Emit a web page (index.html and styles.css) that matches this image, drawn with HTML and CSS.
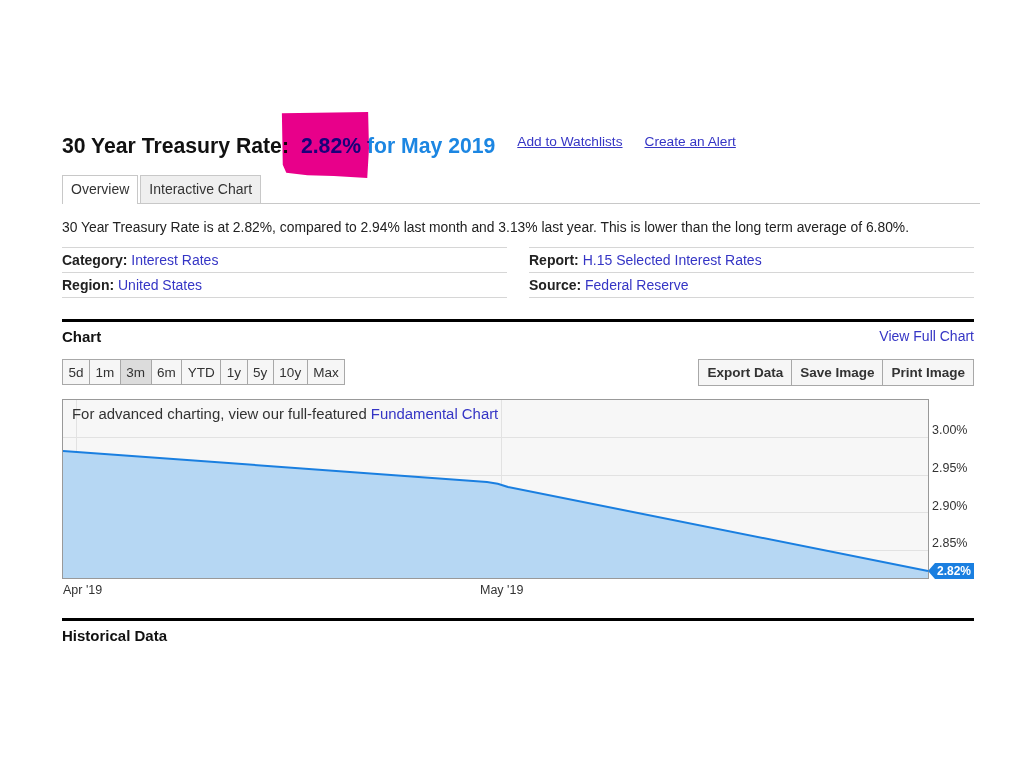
FILE: index.html
```html
<!DOCTYPE html>
<html lang="en">
<head>
  <meta charset="UTF-8" />
  <meta name="viewport" content="width=device-width, initial-scale=1.0" />
  <title>30 Year Treasury Rate</title>
  <link rel="stylesheet" href="styles.css">
</head>
<body>

  <div class="page">
    <!-- Title row -->
    <div class="title-row">
      <h1 class="title">
        30 Year Treasury Rate:<span class="rate">2.82% for May 2019</span>
        <span class="marker"></span>
      </h1>
      <div class="title-links">
        <a href="#">Add to Watchlists</a>
        <a href="#">Create an Alert</a>
      </div>
    </div>

    <!-- Tabs -->
    <div class="tabs">
      <div class="tab active">Overview</div>
      <div class="tab">Interactive Chart</div>
    </div>

    <p class="summary">30 Year Treasury Rate is at 2.82%, compared to 2.94% last month and 3.13% last year. This is lower than the long term average of 6.80%.</p>

    <div class="info">
      <div class="info-col">
        <div class="info-row"><b>Category:</b> <a href="#">Interest Rates</a></div>
        <div class="info-row"><b>Region:</b> <a href="#">United States</a></div>
      </div>
      <div class="info-col">
        <div class="info-row"><b>Report:</b> <a href="#">H.15 Selected Interest Rates</a></div>
        <div class="info-row"><b>Source:</b> <a href="#">Federal Reserve</a></div>
      </div>
    </div>

    <!-- Chart section -->
    <div class="section">
      <div class="section-head">
        <h2>Chart</h2>
        <a href="#">View Full Chart</a>
      </div>

      <div class="toolbar">
        <div class="btn-group ranges">
          <button>5d</button>
          <button>1m</button>
          <button class="on">3m</button>
          <button>6m</button>
          <button>YTD</button>
          <button>1y</button>
          <button>5y</button>
          <button>10y</button>
          <button>Max</button>
        </div>
        <div class="btn-group actions">
          <button>Export Data</button>
          <button>Save Image</button>
          <button>Print Image</button>
        </div>
      </div>

      <svg class="chart" width="912" height="198" viewBox="0 0 912 198">
        <rect x="0.5" y="0.5" width="866" height="179" fill="#f7f7f7" stroke="#999" />
        <g stroke="#e2e2e2" stroke-width="1">
          <line x1="1" y1="38.5" x2="866" y2="38.5" />
          <line x1="1" y1="76.5" x2="866" y2="76.5" />
          <line x1="1" y1="113.5" x2="866" y2="113.5" />
          <line x1="1" y1="151.5" x2="866" y2="151.5" />
          <line x1="14.5" y1="1" x2="14.5" y2="179" />
          <line x1="439.5" y1="1" x2="439.5" y2="179" />
        </g>
        <path d="M1,52 L425,83 Q436,84 446,88 L866,172 L866,179 L1,179 Z" fill="#b6d7f3" />
        <path d="M1,52 L425,83 Q436,84 446,88 L866,172" fill="none" stroke="#1a7fe0" stroke-width="2" />
        <rect x="0.5" y="0.5" width="866" height="179" fill="none" stroke="#999" />

        <text class="note" x="10" y="20">For advanced charting, view our full-featured <tspan class="note-link">Fundamental Chart</tspan></text>

        <g class="axis">
          <text x="870" y="35">3.00%</text>
          <text x="870" y="73">2.95%</text>
          <text x="870" y="111">2.90%</text>
          <text x="870" y="148">2.85%</text>
          <text x="1" y="195">Apr '19</text>
          <text x="418" y="195">May '19</text>
        </g>

        <path d="M866,172 L873,164 L913,164 L913,180 L873,180 Z" fill="#1a7fe0" />
        <text class="last" x="875" y="176">2.82%</text>
      </svg>
    </div>

    <div class="section">
      <div class="section-head">
        <h2>Historical Data</h2>
      </div>
    </div>
  </div>

</body>
</html>
```

FILE: styles.css
```css
body {
  font-family: "Liberation Sans", Arial, sans-serif;
  background-color: #fff;
  color: #222;
  margin: 0;
}

a {
  color: #3535c5;
  text-decoration: none;
}

.page {
  width: 912px;
  margin-left: 62px;
  padding-top: 131px;
}

/* Title */
.title-row {
  display: flex;
  align-items: flex-start;
  gap: 22px;
}

.title {
  position: relative;
  margin: 0;
  font-size: 21.2px;
  line-height: 29px;
  font-weight: bold;
  color: #111;
}

.rate {
  color: #1c86e2;
  margin-left: 12px;
}

/* highlighter stroke over the rate */
.marker {
  position: absolute;
  left: 219px;
  top: -19px;
  width: 88px;
  height: 66px;
  background: #e8008a;
  mix-blend-mode: multiply;
  clip-path: polygon(1% 2%, 99% 0%, 100% 55%, 98% 100%, 60% 97%, 30% 96%, 6% 92%, 2% 80%);
}

.title-links {
  display: flex;
  gap: 22px;
  margin-top: 3px;
  font-size: 13.7px;
}

.title-links a {
  text-decoration: underline;
}

/* Tabs */
.tabs {
  display: flex;
  gap: 2px;
  margin-top: 15px;
  width: 918px;
  border-bottom: 1px solid #c8c8c8;
}

.tab {
  height: 27px;
  line-height: 27px;
  padding: 0 8px;
  font-size: 14px;
  color: #333;
  background: #efefef;
  border: 1px solid #c8c8c8;
  border-bottom: none;
  margin-bottom: -1px;
}

.tab.active {
  background: #fff;
  height: 28px;
}

.summary {
  margin: 13px 0 0;
  font-size: 13.85px;
  line-height: 20px;
  color: #222;
}

/* Info table */
.info {
  display: flex;
  gap: 22px;
  margin-top: 10px;
}

.info-col {
  flex: 1;
  border-top: 1px solid #d6d6d6;
}

.info-row {
  height: 24px;
  line-height: 24px;
  font-size: 14px;
  border-bottom: 1px solid #d6d6d6;
}

.info-row b {
  color: #222;
}

/* Sections */
.section {
  border-top: 3px solid #000;
  margin-top: 21px;
}

.section-head {
  display: flex;
  justify-content: space-between;
  align-items: center;
  height: 28px;
}

.section-head h2 {
  margin: 0;
  font-size: 15px;
  color: #111;
}

.section-head a {
  font-size: 14px;
}

.toolbar {
  display: flex;
  justify-content: space-between;
  margin-top: 9px;
}

.btn-group {
  display: flex;
}

.btn-group button {
  font-family: inherit;
  font-size: 13.5px;
  color: #333;
  height: 26px;
  padding: 0 5.5px;
  background: #f6f6f6;
  border: 1px solid #a8a8a8;
  margin-left: -1px;
  cursor: pointer;
}

.btn-group button:first-child {
  margin-left: 0;
}

.btn-group button.on {
  background: #dcdcdc;
}

.actions button {
  font-weight: bold;
  padding: 0 8px;
  height: 27px;
}

.chart {
  display: block;
  margin-top: 13px;
  font-family: "Liberation Sans", Arial, sans-serif;
}

.chart .note {
  font-size: 14.9px;
  fill: #333;
}

.chart .note-link {
  fill: #3535c5;
}

.chart .axis text {
  font-size: 12.5px;
  fill: #333;
}

.chart .last {
  font-size: 12px;
  font-weight: bold;
  fill: #fff;
}
```
